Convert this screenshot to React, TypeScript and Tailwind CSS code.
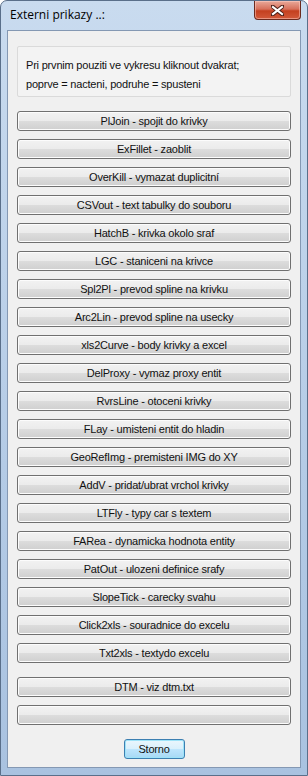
const commands = [
  "PlJoin - spojit do krivky",
  "ExFillet - zaoblit",
  "OverKill - vymazat duplicitní",
  "CSVout - text tabulky do souboru",
  "HatchB - krivka okolo sraf",
  "LGC - staniceni na krivce",
  "Spl2Pl - prevod spline na krivku",
  "Arc2Lin - prevod spline na usecky",
  "xls2Curve - body krivky a excel",
  "DelProxy - vymaz proxy entit",
  "RvrsLine - otoceni krivky",
  "FLay - umisteni entit do hladin",
  "GeoRefImg - premisteni IMG do XY",
  "AddV - pridat/ubrat vrchol krivky",
  "LTFly - typy car s textem",
  "FARea - dynamicka hodnota entity",
  "PatOut - ulozeni definice srafy",
  "SlopeTick - carecky svahu",
  "Click2xls - souradnice do excelu",
  "Txt2xls - textydo excelu",
]

const font = "font-['Liberation_Sans',Arial,sans-serif] tracking-[-0.2px]"

function WinButton({ label }: { label: string }) {
  return (
    <button
      className={`h-[20px] w-full rounded-[3px] border border-[#707070] bg-[linear-gradient(#f2f2f2_0%,#ebebeb_50%,#dddddd_50%,#cfcfcf_100%)] shadow-[inset_0_0_0_1px_#fcfcfc] text-[11px] leading-[18px] text-[#111] ${font}`}
    >
      {label}
    </button>
  )
}

function CloseButton() {
  return (
    <div className="w-[47px] h-[19px] rounded-b-[4px] border border-t-0 border-[#6b2a1e] bg-[linear-gradient(#e9a99a_0%,#d7705b_45%,#c4401f_55%,#d2593a_100%)] shadow-[inset_0_0_0_1px_rgba(255,210,200,0.5)] flex items-center justify-center">
      <svg width="13" height="11" viewBox="0 0 13 11">
        <path
          d="M1.5 1.5 L11.5 9.5 M11.5 1.5 L1.5 9.5"
          stroke="#4a1d16"
          strokeWidth="4"
          strokeLinecap="round"
        />
        <path
          d="M2 2 L11 9 M11 2 L2 9"
          stroke="#ffffff"
          strokeWidth="2.2"
          strokeLinecap="square"
        />
      </svg>
    </div>
  )
}

export default function App() {
  return (
    <div className="w-[308px] h-[776px] rounded-t-[7px] border border-[#5a6f8a] bg-[linear-gradient(#c9dbef,#b4cbe6_60%,#a9c2e0)] flex flex-col">
      <div className="h-[29px] flex items-start justify-between pl-[9px] pr-[6px]">
        <span className="mt-[5px] text-[12px] text-black font-['Open_Sans',sans-serif]">
          Externi prikazy ..:
        </span>
        <CloseButton />
      </div>
      <div className="mx-[6px] h-[738px] border border-[#8498b3] bg-[#f0f0f0] px-[9px] pt-[15px] flex flex-col">
        <div className={`h-[51px] rounded-[2px] border border-[#dadada] bg-[#f3f3f3] pl-[8px] pt-[9px] text-[11px] leading-[19px] text-[#111] ${font}`}>
          <p>Pri prvnim pouziti ve vykresu kliknout dvakrat;</p>
          <p>poprve = nacteni, podruhe = spusteni</p>
        </div>
        <div className="mt-[14px] flex flex-col gap-[8px]">
          {commands.map((c) => (
            <WinButton key={c} label={c} />
          ))}
        </div>
        <div className="mt-[14px] flex flex-col gap-[8px]">
          <WinButton label="DTM - viz dtm.txt" />
          <WinButton label="" />
        </div>
        <div className="mt-[14px] flex justify-center">
          <button
            className={`w-[61px] h-[20px] rounded-[3px] border border-[#3c7fb1] bg-[linear-gradient(#eaf6fd_0%,#d9f0fc_50%,#bee6fd_50%,#a7d9f5_100%)] shadow-[inset_0_0_0_1px_#9ee3f8] text-[11px] leading-[18px] text-[#111] ${font}`}
          >
            Storno
          </button>
        </div>
      </div>
    </div>
  )
}
